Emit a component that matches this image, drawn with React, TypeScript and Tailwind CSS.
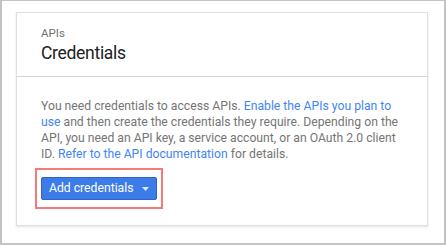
export default function App() {
  return (
    <div
      className="h-[245px] w-[446px] border-t border-x-2 border-b-2 border-[#c3c3c3] bg-white pt-[11px] pl-[14px] pr-[16px]"
      style={{ fontFamily: 'Roboto, "Liberation Sans", sans-serif' }}
    >
      <div className="h-[214px] border border-[#e0e0e0] bg-white shadow-[0_1px_2px_rgba(0,0,0,0.12)]">
        {/* 标题 */}
        <div className="border-b border-[#d6d6d6] px-6 pt-[12px] pb-[11px]">
          <div className="text-[11.5px] leading-[16px] text-[#6f6f6f]">APIs</div>
          <h1 className="text-[17.5px] leading-[24px] tracking-[-0.3px] text-[#212121]">Credentials</h1>
        </div>

        {/* 内容 */}
        <div className="px-6 pt-[21px]">
          <p className="text-[12.2px] leading-[16px] text-[#757575]">
            You need credentials to access APIs.{' '}
            <a className="text-[#4285f4]">Enable the APIs you plan to use</a> and then create the
            credentials they require. Depending on the API, you need an API key, a service account,
            or an OAuth 2.0 client ID. <a className="text-[#4285f4]">Refer to the API documentation</a>{' '}
            for details.
          </p>
          <div className="mt-[6px] -ml-[6px] w-fit border-2 border-[#f47a7a] px-[4px] py-[7px]">
            <button className="flex h-[23px] w-[116px] items-center whitespace-nowrap rounded-[2px] border border-[#2f63c4] bg-[#3b7ce9] pl-[7px] text-[12.2px] text-white">
              Add credentials
              <svg className="ml-[9px]" width="7" height="4" viewBox="0 0 7 4">
                <path d="M0 0h7L3.5 4z" fill="#dfe8fb" />
              </svg>
            </button>
          </div>
        </div>
      </div>
    </div>
  )
}
